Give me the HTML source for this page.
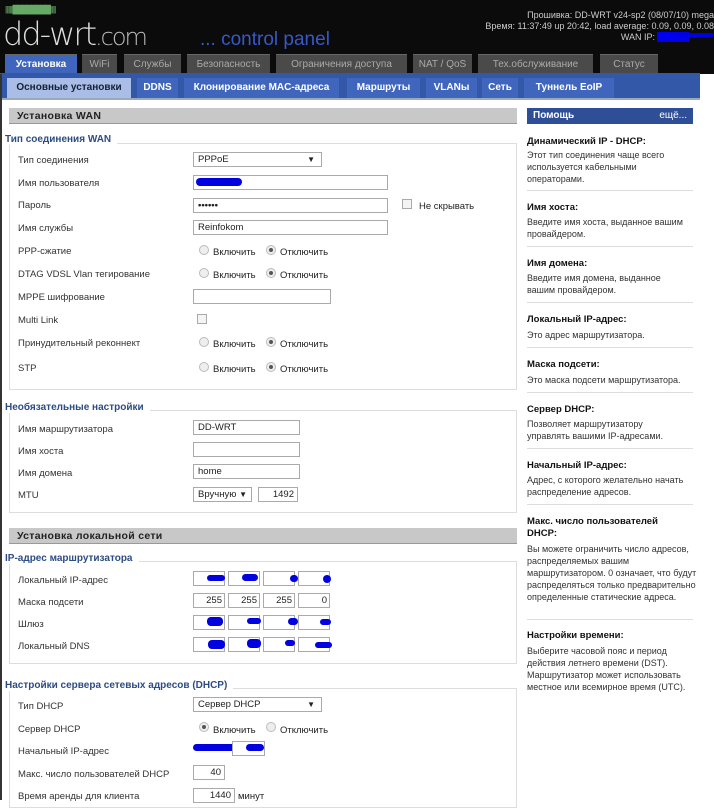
<!DOCTYPE html>
<html><head><meta charset="utf-8"><style>
*{box-sizing:border-box;margin:0;padding:0}
body{width:714px;height:800px;overflow:hidden;background:#fff;font-family:"Liberation Sans","DejaVu Sans",sans-serif;font-size:10px;color:#222;position:relative}
.a{position:absolute;white-space:nowrap}
#hdr{position:absolute;left:0;top:0;width:714px;height:74px;background:#0b0b0b}
.tab{position:absolute;top:54px;height:19px;background:#4a4a4a;color:#aaa;font-size:10px;line-height:19px;text-align:center;border-top:1px solid #666}
#sub{position:absolute;left:0;top:73px;width:700px;height:27px;background:#3458a8;border-bottom:2px solid #9ab}
.st{position:absolute;top:78px;height:20px;background:#3f66bc;color:#fff;font-weight:bold;font-size:10px;line-height:20px;text-align:center}
.sec{position:absolute;left:9px;width:508px;height:16px;background:#c8c8c8;border-bottom:1px solid #999;font-weight:bold;font-size:10.5px;line-height:16px;padding-left:8px;letter-spacing:.3px}
.fs{position:absolute;left:9px;width:508px;border:1px solid #ddd}
.lg{position:absolute;left:5px;font-weight:bold;color:#2d4c84;font-size:10px;background:#fff;padding-right:6px}
.lb{position:absolute;left:18px;font-size:9.5px;color:#333}
.in{position:absolute;height:15px;border:1px solid #aaa;background:#fff;font-size:9.5px;line-height:13px;padding-left:4px}
.rd{position:absolute;width:10px;height:10px;border:1px solid #bbb;border-radius:50%;background:#eee}
.rd.on::after{content:"";position:absolute;left:2px;top:2px;width:4px;height:4px;border-radius:50%;background:#555}
.bl{position:absolute;background:#0000e0;border-radius:4px}
.hh{position:absolute;left:527px;font-weight:bold;font-size:9.5px;color:#111;width:165px;white-space:normal;line-height:12px}
.ht{position:absolute;left:527px;font-size:9px;color:#333;line-height:12px;width:158px;white-space:normal}
.hr{position:absolute;left:527px;width:166px;border-top:1px solid #ddd}
</style></head><body>
<div id="hdr"></div>
<div class="a" style="left:5px;top:5px;color:#6a6;font-size:8px;letter-spacing:-1px">|||||||████████|||||</div>
<div class="a" style="left:3px;top:15px;color:#ddd;font-size:32px;letter-spacing:-2px;font-family:'DejaVu Sans',sans-serif;font-weight:200">dd-wrt<span style="font-size:24px;color:#bbb">.com</span></div>
<div class="a" style="left:200px;top:29px;color:#3858c8;font-size:19px">... control panel</div>
<div class="a" style="right:0;top:10px;color:#ccc;font-size:9px;text-align:right;line-height:11px">Прошивка: DD-WRT v24-sp2 (08/07/10) mega<br>Время: 11:37:49 up 20:42, load average: 0.09, 0.09, 0.08<br>WAN IP: <span style="background:#00e;color:#00e">xxxxxxx</span>&nbsp;&nbsp;&nbsp;&nbsp;&nbsp;&nbsp;&nbsp;&nbsp;&nbsp;&nbsp;</div>
<div class="bl" style="left:678px;top:33px;width:36px;height:4px"></div>
<div class="tab" style="left:5px;width:72px;background:#3f66bc;color:#fff;font-weight:bold;height:20px">Установка</div>
<div class="tab" style="left:82px;width:35px">WiFi</div>
<div class="tab" style="left:124px;width:57px">Службы</div>
<div class="tab" style="left:187px;width:83px">Безопасность</div>
<div class="tab" style="left:276px;width:131px">Ограничения доступа</div>
<div class="tab" style="left:413px;width:59px">NAT / QoS</div>
<div class="tab" style="left:478px;width:115px">Тех.обслуживание</div>
<div class="tab" style="left:600px;width:58px">Статус</div>
<div id="sub"></div>
<div class="st" style="left:7px;width:124px;background:#a9bde6;color:#123">Основные установки</div>
<div class="st" style="left:137px;width:41px">DDNS</div>
<div class="st" style="left:184px;width:155px">Клонирование MAC-адреса</div>
<div class="st" style="left:347px;width:73px">Маршруты</div>
<div class="st" style="left:426px;width:51px">VLANы</div>
<div class="st" style="left:482px;width:36px">Сеть</div>
<div class="st" style="left:524px;width:90px">Туннель EoIP</div>

<div class="sec" style="top:108px">Установка WAN</div>
<div class="fs" style="top:143px;height:247px"></div>
<div class="lg" style="top:134px">Тип соединения WAN</div>
<div class="lb" style="top:155px">Тип соединения</div><div class="in" style="left:193px;top:152px;width:129px">PPPoE<span style="position:absolute;right:6px;font-size:8px">▼</span></div>
<div class="lb" style="top:178px">Имя пользователя</div><div class="in" style="left:193px;top:175px;width:195px"></div><div class="bl" style="left:196px;top:178px;width:46px;height:8px"></div>
<div class="lb" style="top:200px">Пароль</div><div class="in" style="left:193px;top:198px;width:195px;font-weight:bold">••••••</div>
<div class="a" style="left:402px;top:199px;width:10px;height:10px;border:1px solid #aaa;background:#f4f4f4"></div><div class="a" style="left:419px;top:201px;font-size:9.5px">Не скрывать</div>
<div class="lb" style="top:223px">Имя службы</div><div class="in" style="left:193px;top:220px;width:195px">Reinfokom</div>
<div class="lb" style="top:246px">PPP-сжатие</div><div class="rd" style="left:199px;top:245px"></div><div class="a" style="left:213px;top:247px;font-size:9.5px">Включить</div><div class="rd on" style="left:266px;top:245px"></div><div class="a" style="left:280px;top:247px;font-size:9.5px">Отключить</div>
<div class="lb" style="top:269px">DTAG VDSL Vlan тегирование</div><div class="rd" style="left:199px;top:268px"></div><div class="a" style="left:213px;top:270px;font-size:9.5px">Включить</div><div class="rd on" style="left:266px;top:268px"></div><div class="a" style="left:280px;top:270px;font-size:9.5px">Отключить</div>
<div class="lb" style="top:292px">MPPE шифрование</div><div class="in" style="left:193px;top:289px;width:138px"></div>
<div class="lb" style="top:315px">Multi Link</div><div class="a" style="left:197px;top:314px;width:10px;height:10px;border:1px solid #aaa;background:#f4f4f4"></div>
<div class="lb" style="top:338px">Принудительный реконнект</div><div class="rd" style="left:199px;top:337px"></div><div class="a" style="left:213px;top:339px;font-size:9.5px">Включить</div><div class="rd on" style="left:266px;top:337px"></div><div class="a" style="left:280px;top:339px;font-size:9.5px">Отключить</div>
<div class="lb" style="top:363px">STP</div><div class="rd" style="left:199px;top:362px"></div><div class="a" style="left:213px;top:364px;font-size:9.5px">Включить</div><div class="rd on" style="left:266px;top:362px"></div><div class="a" style="left:280px;top:364px;font-size:9.5px">Отключить</div>

<div class="fs" style="top:410px;height:103px"></div>
<div class="lg" style="top:402px">Необязательные настройки</div>
<div class="lb" style="top:424px">Имя маршрутизатора</div><div class="in" style="left:193px;top:420px;width:107px">DD-WRT</div>
<div class="lb" style="top:446px">Имя хоста</div><div class="in" style="left:193px;top:442px;width:107px"></div>
<div class="lb" style="top:468px">Имя домена</div><div class="in" style="left:193px;top:464px;width:107px">home</div>
<div class="lb" style="top:490px">MTU</div><div class="in" style="left:193px;top:487px;width:59px">Вручную<span style="position:absolute;right:4px;font-size:8px">▼</span></div><div class="in" style="left:258px;top:487px;width:40px;text-align:right;padding-right:3px">1492</div>

<div class="sec" style="top:528px">Установка локальной сети</div>
<div class="fs" style="top:561px;height:103px"></div>
<div class="lg" style="top:553px">IP-адрес маршрутизатора</div>
<div class="lb" style="top:575px">Локальный IP-адрес</div>
<div class="lb" style="top:597px">Маска подсети</div>
<div class="lb" style="top:619px">Шлюз</div>
<div class="lb" style="top:641px">Локальный DNS</div>
<div class="in" style="left:193px;top:571px;width:32px"></div><div class="in" style="left:228px;top:571px;width:32px"></div><div class="in" style="left:263px;top:571px;width:32px"></div><div class="in" style="left:298px;top:571px;width:32px"></div>
<div class="bl" style="left:207px;top:575px;width:18px;height:6px"></div><div class="bl" style="left:242px;top:574px;width:16px;height:7px"></div><div class="bl" style="left:290px;top:575px;width:8px;height:7px"></div><div class="bl" style="left:323px;top:575px;width:8px;height:8px"></div>
<div class="in" style="left:193px;top:593px;width:32px;text-align:right;padding-right:2px">255</div><div class="in" style="left:228px;top:593px;width:32px;text-align:right;padding-right:2px">255</div><div class="in" style="left:263px;top:593px;width:32px;text-align:right;padding-right:2px">255</div><div class="in" style="left:298px;top:593px;width:32px;text-align:right;padding-right:2px">0</div>
<div class="in" style="left:193px;top:615px;width:32px"></div><div class="in" style="left:228px;top:615px;width:32px"></div><div class="in" style="left:263px;top:615px;width:32px"></div><div class="in" style="left:298px;top:615px;width:32px"></div>
<div class="bl" style="left:207px;top:617px;width:16px;height:9px"></div><div class="bl" style="left:247px;top:618px;width:14px;height:6px"></div><div class="bl" style="left:288px;top:618px;width:10px;height:7px"></div><div class="bl" style="left:320px;top:619px;width:11px;height:6px"></div>
<div class="in" style="left:193px;top:637px;width:32px"></div><div class="in" style="left:228px;top:637px;width:32px"></div><div class="in" style="left:263px;top:637px;width:32px"></div><div class="in" style="left:298px;top:637px;width:32px"></div>
<div class="bl" style="left:208px;top:640px;width:17px;height:9px"></div><div class="bl" style="left:247px;top:639px;width:14px;height:9px"></div><div class="bl" style="left:285px;top:640px;width:10px;height:6px"></div><div class="bl" style="left:315px;top:642px;width:17px;height:6px"></div>

<div class="fs" style="top:688px;height:120px"></div>
<div class="lg" style="top:680px">Настройки сервера сетевых адресов (DHCP)</div>
<div class="lb" style="top:701px">Тип DHCP</div><div class="in" style="left:193px;top:697px;width:129px">Сервер DHCP<span style="position:absolute;right:6px;font-size:8px">▼</span></div>
<div class="lb" style="top:724px">Сервер DHCP</div><div class="rd on" style="left:199px;top:722px"></div><div class="a" style="left:213px;top:725px;font-size:9.5px">Включить</div><div class="rd" style="left:266px;top:722px"></div><div class="a" style="left:280px;top:725px;font-size:9.5px">Отключить</div>
<div class="lb" style="top:746px">Начальный IP-адрес</div><div class="bl" style="left:193px;top:744px;width:42px;height:7px"></div><div class="in" style="left:232px;top:741px;width:33px"></div><div class="bl" style="left:246px;top:744px;width:18px;height:7px"></div>
<div class="lb" style="top:769px">Макс. число пользователей DHCP</div><div class="in" style="left:193px;top:765px;width:32px;text-align:right;padding-right:3px">40</div>
<div class="lb" style="top:791px">Время аренды для клиента</div><div class="in" style="left:193px;top:788px;width:42px;text-align:right;padding-right:3px">1440</div><div class="a" style="left:238px;top:791px;font-size:9.5px">минут</div>

<div class="a" style="left:527px;top:108px;width:166px;height:16px;background:#2e4f98;color:#fff;font-weight:bold;font-size:10px;line-height:16px;padding:0 6px">Помощь<span style="float:right;font-weight:normal">ещё...</span></div>
<div class="hh" style="top:136px">Динамический IP - DHCP:</div>
<div class="ht" style="top:149px">Этот тип соединения чаще всего используется кабельными операторами.</div>
<div class="hr" style="top:190px"></div>
<div class="hh" style="top:202px">Имя хоста:</div>
<div class="ht" style="top:216px;width:170px">Введите имя хоста, выданное вашим провайдером.</div>
<div class="hr" style="top:246px"></div>
<div class="hh" style="top:258px">Имя домена:</div>
<div class="ht" style="top:272px">Введите имя домена, выданное вашим провайдером.</div>
<div class="hr" style="top:302px"></div>
<div class="hh" style="top:314px">Локальный IP-адрес:</div>
<div class="ht" style="top:329px;width:170px">Это адрес маршрутизатора.</div>
<div class="hr" style="top:347px"></div>
<div class="hh" style="top:359px">Маска подсети:</div>
<div class="ht" style="top:374px;width:175px">Это маска подсети маршрутизатора.</div>
<div class="hr" style="top:392px"></div>
<div class="hh" style="top:404px">Сервер DHCP:</div>
<div class="ht" style="top:418px">Позволяет маршрутизатору управлять вашими IP-адресами.</div>
<div class="hr" style="top:448px"></div>
<div class="hh" style="top:460px">Начальный IP-адрес:</div>
<div class="ht" style="top:474px;width:170px">Адрес, с которого желательно начать распределение адресов.</div>
<div class="hr" style="top:504px"></div>
<div class="hh" style="top:516px;width:150px">Макс. число пользователей DHCP:</div>
<div class="ht" style="top:543px;width:172px">Вы можете ограничить число адресов, распределяемых вашим маршрутизатором. 0 означает, что будут распределяться только предварительно определенные статические адреса.</div>
<div class="hr" style="top:619px"></div>
<div class="hh" style="top:630px">Настройки времени:</div>
<div class="ht" style="top:645px;width:175px">Выберите часовой пояс и период действия летнего времени (DST). Маршрутизатор может использовать местное или всемирное время (UTC).</div>
<div class="a" style="left:0;top:74px;width:2px;height:726px;background:#333"></div>
</body></html>
